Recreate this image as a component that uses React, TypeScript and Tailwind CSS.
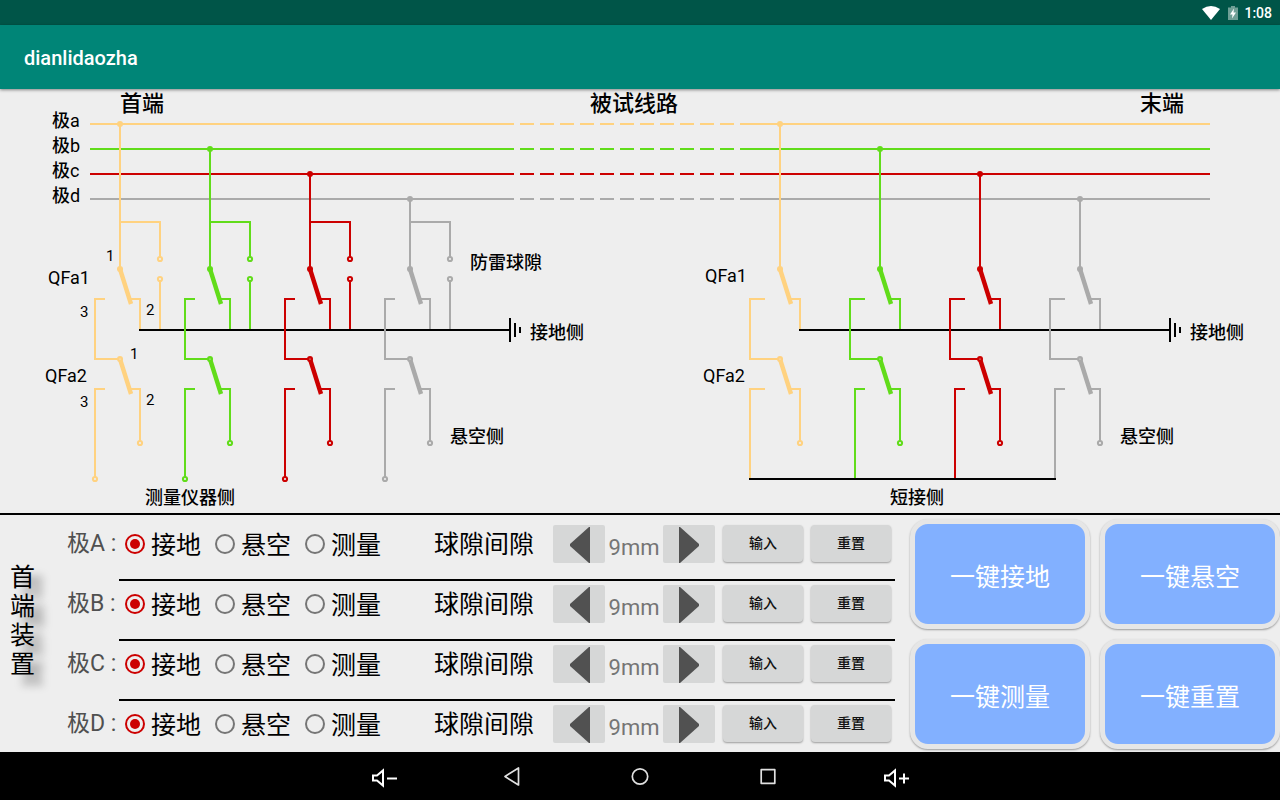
import { useState } from 'react';

const LINE_COLORS = ['#ffd280', '#61dc1a', '#cc0000', '#aaaaaa'];
const LEFT_X = [120, 210, 310, 410];
const RIGHT_X = [780, 880, 980, 1080];
const LEFT_RETURN_X = [95, 185, 285, 385];
const RIGHT_RETURN_X = [750, 850, 950, 1050];
const SHORT_X = [750, 855, 955, 1055];

function Terminal({ x, y }: { x: number; y: number }) {
  return <circle cx={x} cy={y} r={2.1} fill="#eeeeee" strokeWidth={2} />;
}

function Ground({ from, x }: { from: number; x: number }) {
  return (
    <path
      d={`M${from} 330H${x}M${x} 318V342M${x + 5} 323V337M${x + 10} 327V333`}
      stroke="#000"
      strokeWidth={2}
      fill="none"
    />
  );
}

type SwitchProps = {
  x: number;
  top: number;
  color: string;
  returnX: number;
  stubEnd: number;
  lowerX: number;
  gap?: boolean;
};

function SwitchColumn({ x, top, color, returnX, stubEnd, lowerX, gap }: SwitchProps) {
  return (
    <g stroke={color} strokeWidth={2} fill="none">
      <path d={`M${x} ${top}V269`} />
      <path d={`M${x + 9} 299H${x + 20}V329M${x + 9} 389H${x + 20}V441`} />
      <path d={`M${stubEnd} 299H${returnX}V359H${x}`} />
      <path d={`M${lowerX + (gap ? 10 : stubEnd - lowerX)} 389H${lowerX}V478`} />
      {gap && (
        <>
          <path d={`M${x} 222H${x + 40}V257M${x + 40} 280V329`} />
          <Terminal x={x + 40} y={259} />
          <Terminal x={x + 40} y={279} />
          <Terminal x={lowerX} y={479} />
        </>
      )}
      <circle cx={x} cy={top} r={3} fill={color} stroke="none" />
      <circle cx={x} cy={269} r={3} fill={color} stroke="none" />
      <circle cx={x} cy={359} r={3} fill={color} stroke="none" />
      <path d={`M${x} 269L${x + 11} 304M${x} 359L${x + 11} 394`} strokeWidth={4.4} />
      <circle cx={x} cy={359} r={0.6} fill="#eeeeee" stroke="none" />
      <Terminal x={x + 20} y={443} />
    </g>
  );
}

const LABELS: [number, number, number, string][] = [
  [120, 111, 22, '首端'],
  [590, 111, 22, '被试线路'],
  [1140, 111, 22, '末端'],
  [52, 127, 18, '极a'],
  [52, 152, 18, '极b'],
  [52, 177, 18, '极c'],
  [52, 202, 18, '极d'],
  [106, 261, 15, '1'],
  [48, 284, 18, 'QFa1'],
  [80, 317, 15, '3'],
  [146, 315, 15, '2'],
  [130, 359, 15, '1'],
  [45, 382, 18, 'QFa2'],
  [80, 407, 15, '3'],
  [146, 405, 15, '2'],
  [145, 504, 18, '测量仪器侧'],
  [470, 269, 18, '防雷球隙'],
  [530, 339, 18, '接地侧'],
  [450, 443, 18, '悬空侧'],
  [705, 282, 18, 'QFa1'],
  [703, 382, 18, 'QFa2'],
  [890, 504, 18, '短接侧'],
  [1190, 339, 18, '接地侧'],
  [1120, 443, 18, '悬空侧'],
];

function Diagram() {
  return (
    <svg viewBox="0 89 1280 424" className="block w-full" role="img" aria-label="被试线路">
      {LINE_COLORS.map((color, i) => {
        const y = 124 + i * 25;
        return (
          <g key={color} stroke={color} strokeWidth={2}>
            <path d={`M90 ${y}H510M740 ${y}H1210`} />
            <path d={`M500 ${y}H740`} strokeDasharray="14 6" />
          </g>
        );
      })}
      <Ground from={139} x={510} />
      <Ground from={799} x={1170} />
      {LINE_COLORS.map((color, i) => (
        <g key={color}>
          <SwitchColumn
            x={LEFT_X[i]}
            top={124 + i * 25}
            color={color}
            returnX={LEFT_RETURN_X[i]}
            stubEnd={LEFT_RETURN_X[i] + 10}
            lowerX={LEFT_RETURN_X[i]}
            gap
          />
          <SwitchColumn
            x={RIGHT_X[i]}
            top={124 + i * 25}
            color={color}
            returnX={RIGHT_RETURN_X[i]}
            stubEnd={RIGHT_RETURN_X[i] + 15}
            lowerX={SHORT_X[i]}
          />
        </g>
      ))}
      <path d="M749 479H1056" stroke="#000" strokeWidth={2} />
      {LABELS.map(([x, y, size, text]) => {
        const han = text.replace(/[A-Za-z0-9]/g, '');
        return (
          <text key={`${x}-${y}`} x={x} y={y} fontSize={size} fill="#000">
            {han && <tspan className="font-medium">{han}</tspan>}
            {text.slice(han.length)}
          </text>
        );
      })}
    </svg>
  );
}

function StatusBar() {
  return (
    <div className="flex h-[25px] items-center justify-end bg-[#005548] pr-2 text-white">
      <svg viewBox="0 0 18 14" className="h-3.5 w-[18px]" aria-hidden="true">
        <path d="M0 3Q9-3 18 3L9 14Z" fill="#fff" />
      </svg>
      <svg viewBox="0 0 10 14" className="ml-2 h-3.5 w-2.5" aria-hidden="true">
        <path d="M3 0H7V1.5H10V14H0V1.5H3Z" fill="#6f9f96" />
        <path d="M6 2.5L2 8.5H4.5L4 12.5L8 6.5H5.5Z" fill="#fff" />
      </svg>
      <span className="ml-1.5 pt-0.5 text-sm leading-[25px] font-medium">1:08</span>
    </div>
  );
}

const MODES = ['接地', '悬空', '测量'];

function Arrow({ direction }: { direction: 'left' | 'right' }) {
  return (
    <svg viewBox="0 0 52 38" className="block h-[38px] w-[52px]" aria-hidden="true">
      <path d={direction === 'left' ? 'M37 2V38H36L17 21V19L36 2Z' : 'M16 2V38H17L36 21V19L17 2Z'} fill="#515151" />
    </svg>
  );
}

function PoleRow({ pole, last }: { pole: string; last: boolean }) {
  const [mode, setMode] = useState(MODES[0]);
  const [gap, setGap] = useState(9);
  const small =
    'h-[37px] w-20 rounded-sm bg-[#d6d7d7] pb-0.5 text-sm font-medium text-[#111] shadow-[0_1px_2px_rgba(0,0,0,0.35)]';
  return (
    <div className={`flex shrink-0 ${last ? 'h-[51px]' : 'h-[60px]'}`}>
      <span className="w-[52px] shrink-0 pt-1 text-[23px] leading-[38px] whitespace-pre text-[#505050]">极{pole} :</span>
      <div className={`flex grow border-black ${last ? '' : 'border-b-2'}`}>
        <div role="radiogroup" aria-label={`极${pole}`} className="flex w-[315px] shrink-0 pt-1 pl-1.5">
          {MODES.map((m) => (
            <label key={m} className="flex h-[38px] w-[90px] shrink-0 items-center gap-1.5 text-[25px] leading-[38px] text-black">
              <input
                type="radio"
                name={`pole-${pole}`}
                checked={mode === m}
                onChange={() => setMode(m)}
                className="grid size-5 shrink-0 appearance-none place-items-center rounded-full border-2 border-[#757575] before:size-2.5 before:rounded-full checked:border-[#cc0000] checked:before:bg-[#cc0000]"
              />
              <span className="pt-[3px]">{m}</span>
            </label>
          ))}
        </div>
        <span className="w-[119px] shrink-0 pt-1 text-[25px] leading-[40px] text-black">球隙间隙</span>
        <div className="flex shrink-0 pt-1">
          <button type="button" aria-label="减小" onClick={() => setGap(gap - 1)} className="h-[38px] rounded-xs bg-[#d6d7d7]">
            <Arrow direction="left" />
          </button>
          <output className="w-[58px] pt-1 text-center text-[22px] leading-[38px] text-[#757575]">{gap}mm</output>
          <button type="button" aria-label="增大" onClick={() => setGap(gap + 1)} className="h-[38px] rounded-xs bg-[#d6d7d7]">
            <Arrow direction="right" />
          </button>
          <button type="button" className={`${small} ml-2`}>输入</button>
          <button type="button" onClick={() => setGap(9)} className={`${small} ml-2`}>重置</button>
        </div>
      </div>
    </div>
  );
}

function Controls() {
  return (
    <section className="flex overflow-hidden">
      <h2 className="w-[67px] shrink-0 pt-12 pl-2.5 text-[25px] leading-[29px] font-normal text-black [text-shadow:10px_10px_8px_rgba(0,0,0,0.4)]">
        {['首', '端', '装', '置'].map((c) => (
          <span key={c} className="block">{c}</span>
        ))}
      </h2>
      <div className="flex w-[828px] shrink-0 flex-col pt-1.5">
        {['A', 'B', 'C', 'D'].map((p, i) => (
          <PoleRow key={p} pole={p} last={i === 3} />
        ))}
      </div>
      <div className="grid grow grid-cols-2 content-start gap-2.5 pt-1 pl-[15px]">
        {['一键接地', '一键悬空', '一键测量', '一键重置'].map((label) => (
          <button
            key={label}
            type="button"
            className="h-[110px] rounded-[18px] border-5 border-[#e6e6e6] bg-[#82b0ff] pt-2 text-[25px] text-white shadow-[0_1px_2px_rgba(0,0,0,0.35)]"
          >
            {label}
          </button>
        ))}
      </div>
    </section>
  );
}

function VolumeIcon({ plus }: { plus?: boolean }) {
  return (
    <svg viewBox="0 0 28 24" className="h-6 w-7" fill="none" stroke="#fff" strokeWidth={2} aria-hidden="true">
      <path d="M3 11.500H7L13 6.500V21.500L7 16.500H3Z" />
      <path d={plus ? 'M17 14.500H27M22 9.500V19.500' : 'M17 14.500H27'} />
    </svg>
  );
}

function NavBar() {
  const button = 'flex h-12 w-32 items-center justify-center';
  return (
    <nav className="flex h-12 justify-center bg-black">
      <button type="button" aria-label="音量减" className={button}>
        <VolumeIcon />
      </button>
      <button type="button" aria-label="返回" className={button}>
        <svg viewBox="0 0 24 24" className="size-6" fill="none" stroke="#e0e0e0" strokeWidth={1.7} strokeLinejoin="round" aria-hidden="true">
          <path d="M5 12.500L18.500 4V21Z" />
        </svg>
      </button>
      <button type="button" aria-label="主页" className={button}>
        <svg viewBox="0 0 24 24" className="size-6" fill="none" stroke="#e0e0e0" strokeWidth={1.7} aria-hidden="true">
          <circle cx={12} cy={12.5} r={7.7} />
        </svg>
      </button>
      <button type="button" aria-label="最近" className={button}>
        <svg viewBox="0 0 24 24" className="size-6" fill="none" stroke="#e0e0e0" strokeWidth={1.7} strokeLinejoin="round" aria-hidden="true">
          <rect x={5.2} y={5.7} width={13.6} height={13.6} />
        </svg>
      </button>
      <button type="button" aria-label="音量加" className={button}>
        <VolumeIcon plus />
      </button>
    </nav>
  );
}

export default function App() {
  return (
    <div className="flex min-h-screen flex-col bg-[#eeeeee] font-['Roboto','Noto_Sans_CJK_SC',sans-serif]">
      <StatusBar />
      <header className="relative flex h-16 items-center bg-[#008577] px-6 shadow-[0_1px_3px_rgba(0,0,0,0.45)]">
        <h1 className="pt-0.5 text-xl font-medium text-white">dianlidaozha</h1>
      </header>
      <main className="grow">
        <Diagram />
        <div className="h-0.5 bg-black" />
        <Controls />
      </main>
      <NavBar />
    </div>
  );
}
